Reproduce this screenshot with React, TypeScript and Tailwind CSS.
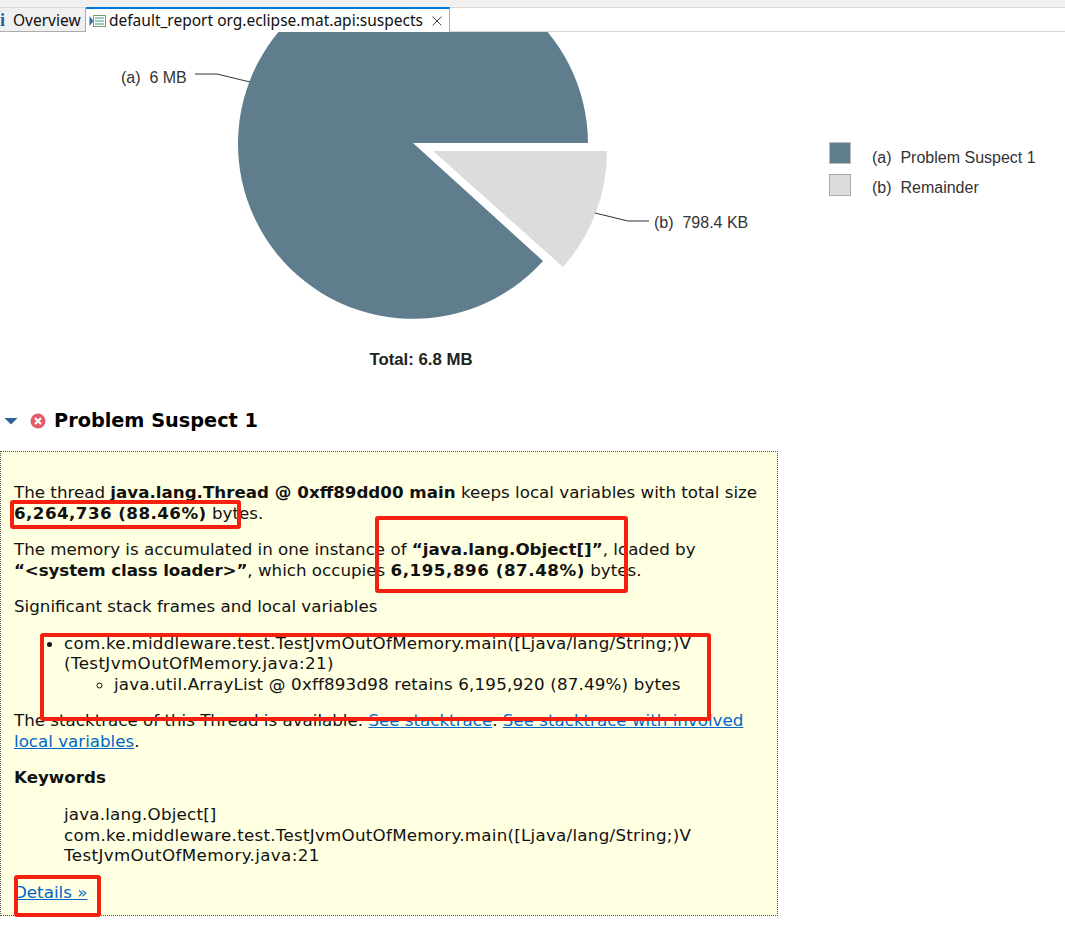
import React from "react";

const linkClass = "text-[#0066cc] underline";

// Red annotation rectangles drawn over the report
function Mark({ className }: { className: string }) {
    return (
        <div
            className={`absolute border-[4px] border-[#f5200f] rounded-[3px] ${className}`}
        />
    );
}

function Tabs() {
    return (
        <div className="h-[32px] bg-white">
            <div className="h-[7px] bg-[#f0f0f0]" />
            <div className="flex h-[25px] bg-white border-t border-b border-[#d8d8d8] text-[15.5px] font-['Noto_Sans',sans-serif]">
                <div className="flex items-center w-[86px] h-[24px] pt-[2px] bg-[#f0f0f0] border-b border-r border-[#acacac] text-[#111]">
                    <span className="w-[13px] text-[#1f5f9f] text-[18px] font-bold font-['Liberation_Serif',serif]">
                        i
                    </span>
                    <span>Overview</span>
                </div>
                <div className="flex items-center w-[364px] h-[25px] -mt-[1px] bg-white border-t-2 border-t-[#0078d7] border-r border-[#acacac] text-[#111]">
                    <svg width="20" height="16" viewBox="0 0 20 16" className="ml-[3px] shrink-0">
                        <path d="M0.5 3 L4.5 8 L0.5 13 Z" fill="#2a6ea8" />
                        <rect x="4.5" y="2.5" width="12" height="11" fill="#fff" stroke="#7d9a6a" />
                        <path d="M6 5h9M6 8h9M6 11h9" stroke="#3f9f6f" />
                    </svg>
                    <span className="whitespace-nowrap">
                        default_report org.eclipse.mat.api:suspects
                    </span>
                    <svg width="12" height="12" viewBox="0 0 12 12" className="ml-[8px] shrink-0">
                        <path d="M1.5 1.5 L10.5 10.5 M10.5 1.5 L1.5 10.5" stroke="#444" strokeWidth="1" />
                    </svg>
                </div>
            </div>
        </div>
    );
}

function PieChart() {
    return (
        <svg width="1065" height="352" viewBox="0 32 1065 352" className="block">
            <g fontFamily="Liberation Sans, sans-serif" fontSize="16" fill="#333">
                <path d="M413 143 L588 143 A175 175 0 1 0 543 261 Z" fill="#607d8e" />
                <path d="M433 151 L607 151 A174 174 0 0 1 563 267 Z" fill="#dcdcdc" />
                <path d="M195 74 H217 L250 82" stroke="#333" fill="none" />
                <path d="M595 213 L628 221 H649" stroke="#333" fill="none" />
                <text x="121" y="83" xmlSpace="preserve">(a)  6 MB</text>
                <text x="654" y="228" xmlSpace="preserve">(b)  798.4 KB</text>
                <rect x="829.5" y="142.5" width="21" height="21" fill="#607d8e" stroke="#bbb" />
                <rect x="829.5" y="174.5" width="21" height="21" fill="#dcdcdc" stroke="#aaa" />
                <text x="872" y="163" xmlSpace="preserve">(a)  Problem Suspect 1</text>
                <text x="872" y="193" xmlSpace="preserve">(b)  Remainder</text>
                <text x="421" y="365" textAnchor="middle" fontWeight="bold" fontSize="16.8" fill="#222">
                    Total: 6.8 MB
                </text>
            </g>
        </svg>
    );
}

function SuspectHeading() {
    return (
        <div className="flex items-center h-[36px] mt-[19px]">
            <svg width="14" height="8" viewBox="0 0 14 8" className="ml-[4px]">
                <path d="M0.5 1 H13.5 L7 7.5 Z" fill="#2f5f96" />
            </svg>
            <svg width="16" height="16" viewBox="0 0 16 16" className="ml-[12px]">
                <circle cx="8" cy="8" r="7.5" fill="#e45b6b" />
                <path d="M5 5 L11 11 M11 5 L5 11" stroke="#fff" strokeWidth="2.2" />
            </svg>
            <h2 className="ml-[8px] text-[19.3px] font-bold text-black">Problem Suspect 1</h2>
        </div>
    );
}

function ReportBox() {
    return (
        <div className="w-[778px] h-[465px] mt-[12px] pl-[13px] pr-[14px] pt-[30px] bg-[#ffffe1] border border-dotted border-[#555] text-[16.7px] leading-[20.5px] text-[#111]">
            <p>
                The thread <b>java.lang.Thread @ 0xff89dd00 main</b> keeps local variables with total size <b className="tracking-[0.45px]">6,264,736 (88.46%)</b> bytes.
            </p>
            <p className="mt-[16.1px]">
                The memory is accumulated in one instance of <b>“java.lang.Object[]”</b>, loaded by <b className="tracking-[-0.1px]">“&lt;system class loader&gt;”</b>, which occupies <b className="tracking-[0.55px]">6,195,896 (87.48%)</b> bytes.
            </p>
            <p className="mt-[16.1px]">Significant stack frames and local variables</p>
            <ul className="mt-[16.1px] pl-[50px] list-disc">
                <li>
                    <span className="tracking-[0.26px]">com.ke.middleware.test.TestJvmOutOfMemory.main([Ljava/lang/String;)V</span>{" "}
                    <span className="tracking-[0.4px]">(TestJvmOutOfMemory.java:21)</span>
                    <ul className="pl-[50px] list-[circle]">
                        <li className="tracking-[0.17px]">java.util.ArrayList @ 0xff893d98 retains 6,195,920 (87.49%) bytes</li>
                    </ul>
                </li>
            </ul>
            <p className="mt-[16.1px]">
                The stacktrace of this Thread is available. <a className={linkClass}>See stacktrace</a>. <a className={linkClass}>See stacktrace with involved local variables</a>.
            </p>
            <p className="mt-[16.1px] font-bold">Keywords</p>
            <div className="mt-[16.1px] pl-[50px]">
                <div className="tracking-[0.2px]">java.lang.Object[]</div>
                <div className="tracking-[0.26px]">com.ke.middleware.test.TestJvmOutOfMemory.main([Ljava/lang/String;)V</div>
                <div className="tracking-[0.38px]">TestJvmOutOfMemory.java:21</div>
            </div>
            <p className="mt-[16.1px]">
                <a className={linkClass}>Details »</a>
            </p>
        </div>
    );
}

export default function App() {
    return (
        <div className="relative w-[1065px] h-[932px] overflow-hidden bg-white font-['DejaVu_Sans',sans-serif]">
            <Tabs />
            <PieChart />
            <SuspectHeading />
            <ReportBox />

            <Mark className="left-[10px] top-[500px] w-[231px] h-[29px]" />
            <Mark className="left-[375px] top-[516px] w-[253px] h-[77px]" />
            <Mark className="left-[40px] top-[633px] w-[671px] h-[88px]" />
            <Mark className="left-[14px] top-[875px] w-[87px] h-[42px]" />
        </div>
    );
}
